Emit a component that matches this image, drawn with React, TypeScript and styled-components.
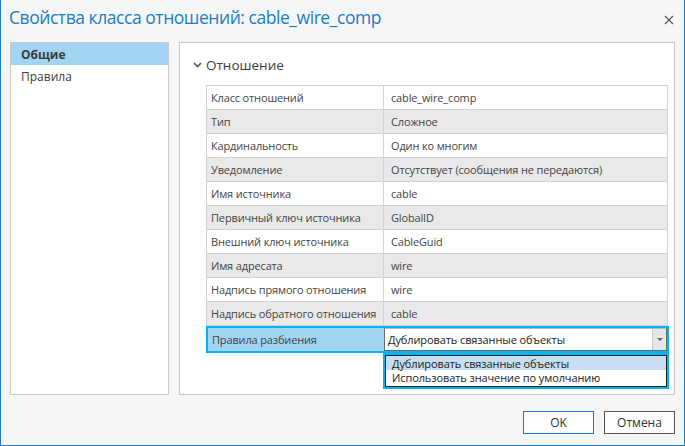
import React from "react";
import styled, { createGlobalStyle } from "styled-components";

const Global = createGlobalStyle`
  html, body { margin: 0; padding: 0; background: #f5f7f7; }
  body { font-family: "Open Sans", "Noto Sans", sans-serif; }
  * { box-sizing: border-box; }
`;

const Dialog = styled.div`
  width: 685px;
  height: 446px;
  background: #f5f7f7;
  border: 1px solid #1c7cd5;
  border-top: none;
  display: flex;
  flex-direction: column;
`;

const TitleBar = styled.div`
  height: 42px;
  display: flex;
  align-items: flex-start;
  justify-content: space-between;
  padding: 5px 0 0 8px;
`;

const Title = styled.div`
  font-family: "Open Sans", sans-serif;
  font-weight: 400;
  font-size: 17.5px;
  color: #1c7cc4;
  letter-spacing: -0.45px;
`;

const Close = styled.div`
  width: 24px;
  height: 24px;
  margin-right: 3px;
  margin-top: 3px;
  display: flex;
  align-items: center;
  justify-content: center;
`;

const Body = styled.div`
  display: flex;
  gap: 10px;
  padding: 0 9px 0 9px;
  height: 353px;
`;

const NavList = styled.div`
  width: 160px;
  background: #fff;
  border: 1px solid #c8c8c8;
  display: flex;
  flex-direction: column;
`;

const NavItem = styled.div<{ $active?: boolean }>`
  height: 22px;
  padding-left: 10px;
  display: flex;
  align-items: center;
  font-size: 12px;
  color: #3c3c3c;
  font-weight: ${(p) => (p.$active ? 700 : 400)};
  background: ${(p) => (p.$active ? "#a2d4f4" : "transparent")};
`;

const Panel = styled.div`
  flex: 1;
  background: #fff;
  border: 1px solid #c8c8c8;
  padding: 12px 6px 0 26px;
  display: flex;
  flex-direction: column;
`;

const SectionHeader = styled.div`
  display: flex;
  align-items: center;
  gap: 4px;
  height: 20px;
  margin-left: -13px;
  font-size: 13.5px;
  color: #3c3c3c;
  margin-bottom: 10px;
`;

const Table = styled.div`
  width: 462px;
  border-top: 1px solid #d2d2d2;
  border-left: 1px solid #d2d2d2;
  display: flex;
  flex-direction: column;
`;

const Row = styled.div<{ $alt?: boolean }>`
  display: grid;
  grid-template-columns: 177px 1fr;
  height: 24px;
  background: ${(p) => (p.$alt ? "#e9e9e9" : "#fff")};
  border-bottom: 1px solid #d2d2d2;
`;

const Cell = styled.div`
  display: flex;
  align-items: center;
  padding-left: 4px;
  font-size: 11px;
  letter-spacing: -0.15px;
  color: #444;
  border-right: 1px solid #d2d2d2;
  white-space: nowrap;
  overflow: hidden;
`;

const ValueCell = styled(Cell)`
  padding-left: 7px;
`;

const FocusRow = styled.div`
  position: relative;
  margin-left: -1px;
  width: 463px;
  height: 27px;
  border: 2px solid #00b4ef;
  display: grid;
  grid-template-columns: 176px 1fr;
`;

const FocusLabel = styled.div`
  background: #a2d4f4;
  display: flex;
  align-items: center;
  padding-left: 4px;
  font-size: 11px;
  letter-spacing: -0.15px;
  color: #444;
`;

const Combo = styled.div`
  background: #fff;
  border: 1px solid #6a6a6a;
  border-top-color: #b8b8b8;
  display: flex;
  align-items: center;
  font-size: 11px;
  letter-spacing: -0.1px;
  color: #222;
  padding-left: 3px;
  position: relative;
`;

const ComboArrow = styled.div`
  position: absolute;
  right: 0;
  top: 0;
  bottom: 0;
  width: 14px;
  background: #e6e6e6;
  border-left: 1px solid #c8c8c8;
  display: flex;
  align-items: center;
  justify-content: center;
`;

const DropList = styled.div`
  position: absolute;
  left: 175px;
  top: 25px;
  width: 286px;
  border: 2px solid #00b4ef;
  background: #fff;
  display: flex;
  flex-direction: column;
`;

const DropInner = styled.div`
  border: 1px solid #222;
  padding: 0 0 2px 0;
`;

const DropItem = styled.div<{ $active?: boolean }>`
  height: 14px;
  display: flex;
  align-items: center;
  padding-left: 6px;
  font-size: 11px;
  letter-spacing: -0.1px;
  color: #222;
  background: ${(p) => (p.$active ? "#c8def2" : "#fff")};
`;

const Footer = styled.div`
  display: flex;
  justify-content: flex-end;
  gap: 10px;
  padding: 16px 9px 0 0;
`;

const Button = styled.button<{ $primary?: boolean }>`
  height: 23px;
  width: 71px;
  background: #fdfdfd;
  border: 1px solid ${(p) => (p.$primary ? "#1a78d0" : "#555")};
  font-family: "Open Sans", sans-serif;
  font-size: 12px;
  color: #333;
  padding: 0;
`;

const rows: [string, string][] = [
  ["Класс отношений", "cable_wire_comp"],
  ["Тип", "Сложное"],
  ["Кардинальность", "Один ко многим"],
  ["Уведомление", "Отсутствует (сообщения не передаются)"],
  ["Имя источника", "cable"],
  ["Первичный ключ источника", "GlobalID"],
  ["Внешний ключ источника", "CableGuid"],
  ["Имя адресата", "wire"],
  ["Надпись прямого отношения", "wire"],
  ["Надпись обратного отношения", "cable"],
];

export default function App() {
  return (
    <>
      <Global />
      <Dialog>
        <TitleBar>
          <Title>Свойства класса отношений: cable_wire_comp</Title>
          <Close>
            <svg width="10" height="10" viewBox="0 0 10 10">
              <path d="M1 1L9 9M9 1L1 9" stroke="#555" strokeWidth="1.1" />
            </svg>
          </Close>
        </TitleBar>
        <Body>
          <NavList>
            <NavItem $active>Общие</NavItem>
            <NavItem>Правила</NavItem>
          </NavList>
          <Panel>
            <SectionHeader>
              <svg width="9" height="6" viewBox="0 0 9 6">
                <path d="M1 1L4.5 4.5L8 1" stroke="#555" strokeWidth="1.6" fill="none" />
              </svg>
              Отношение
            </SectionHeader>
            <Table>
              {rows.map(([k, v], i) => (
                <Row key={k} $alt={i % 2 === 1}>
                  <Cell>{k}</Cell>
                  <ValueCell>{v}</ValueCell>
                </Row>
              ))}
              <FocusRow>
                <FocusLabel>Правила разбиения</FocusLabel>
                <Combo>
                  Дублировать связанные объекты
                  <ComboArrow>
                    <svg width="6" height="4" viewBox="0 0 6 4">
                      <path d="M0 0H6L3 3Z" fill="#666" />
                    </svg>
                  </ComboArrow>
                </Combo>
                <DropList>
                  <DropInner>
                    <DropItem $active>Дублировать связанные объекты</DropItem>
                    <DropItem>Использовать значение по умолчанию</DropItem>
                  </DropInner>
                </DropList>
              </FocusRow>
            </Table>
          </Panel>
        </Body>
        <Footer>
          <Button $primary>OK</Button>
          <Button>Отмена</Button>
        </Footer>
      </Dialog>
    </>
  );
}
